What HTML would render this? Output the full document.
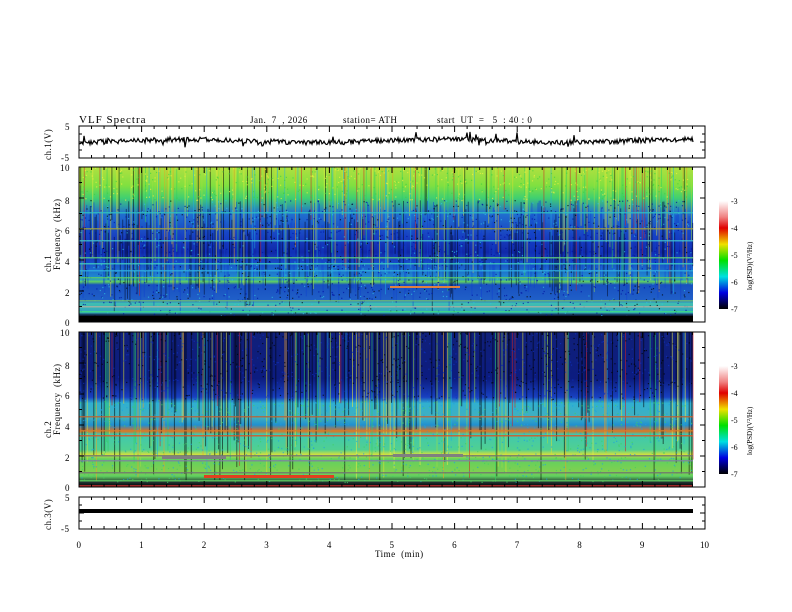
<!DOCTYPE html>
<html><head><meta charset="utf-8"><style>
html,body{margin:0;padding:0;background:#fff;width:792px;height:612px;overflow:hidden}
svg{display:block}
text{font-family:"Liberation Serif",serif;fill:#000}
</style></head><body>
<svg id="s" width="792" height="612" xmlns="http://www.w3.org/2000/svg">
<defs>
<linearGradient id="g1" x1="0" y1="0" x2="0" y2="1">
<stop offset="0" stop-color="#b0e040"/><stop offset="0.12" stop-color="#80e040"/>
<stop offset="0.2" stop-color="#40d070"/><stop offset="0.3" stop-color="#2070d0"/>
<stop offset="0.45" stop-color="#1840c0"/><stop offset="0.55" stop-color="#1028a8"/>
<stop offset="0.62" stop-color="#1850c8"/><stop offset="0.72" stop-color="#2090d0"/>
<stop offset="0.74" stop-color="#60d060"/><stop offset="0.76" stop-color="#1850c0"/>
<stop offset="0.86" stop-color="#2060c8"/><stop offset="0.88" stop-color="#40c0b0"/>
<stop offset="0.94" stop-color="#30a0c0"/><stop offset="0.955" stop-color="#102040"/>
<stop offset="1" stop-color="#000"/>
</linearGradient>
<linearGradient id="g2" x1="0" y1="0" x2="0" y2="1">
<stop offset="0" stop-color="#10207a"/><stop offset="0.3" stop-color="#0c1c80"/>
<stop offset="0.42" stop-color="#1840c0"/><stop offset="0.46" stop-color="#30b0d0"/>
<stop offset="0.55" stop-color="#40b0c0"/><stop offset="0.6" stop-color="#2090d0"/>
<stop offset="0.64" stop-color="#e07020"/><stop offset="0.66" stop-color="#40c8b0"/>
<stop offset="0.76" stop-color="#50d090"/><stop offset="0.79" stop-color="#d0e040"/>
<stop offset="0.82" stop-color="#60d060"/><stop offset="0.9" stop-color="#80d050"/>
<stop offset="0.93" stop-color="#60d060"/><stop offset="0.97" stop-color="#203030"/><stop offset="1" stop-color="#000"/>
</linearGradient>
<linearGradient id="cb" x1="0" y1="0" x2="0" y2="1">
<stop offset="0" stop-color="#fff"/><stop offset="0.15" stop-color="#f08080"/>
<stop offset="0.25" stop-color="#e00000"/><stop offset="0.4" stop-color="#f0e000"/>
<stop offset="0.55" stop-color="#00e000"/><stop offset="0.7" stop-color="#00e0e0"/>
<stop offset="0.85" stop-color="#0000e0"/><stop offset="1" stop-color="#000"/>
</linearGradient>
</defs>
<rect x="79" y="167" width="614" height="155" fill="url(#g1)"/>
<rect x="79" y="332" width="614" height="155" fill="url(#g2)"/>
<g id="st1"></g><g id="st2"></g>
<g id="ax" stroke="#000" fill="none" stroke-width="1"></g>
<polyline id="trace" fill="none" stroke="#000" stroke-width="1.2"/>
<rect x="79" y="509" width="614" height="4" fill="#000"/>
<rect x="719" y="201" width="9" height="108" fill="url(#cb)"/>
<rect x="719" y="366" width="9" height="108" fill="url(#cb)"/>
<g font-size="8">
<text x="731" y="204">-3</text><text x="731" y="231">-4</text><text x="731" y="258">-5</text><text x="731" y="285">-6</text><text x="731" y="312">-7</text>
<text x="731" y="369">-3</text><text x="731" y="396">-4</text><text x="731" y="423">-5</text><text x="731" y="450">-6</text><text x="731" y="477">-7</text>
<text transform="translate(752,290) rotate(-90)" font-size="7">log(PSD)(V²/Hz)</text>
<text transform="translate(752,455) rotate(-90)" font-size="7">log(PSD)(V²/Hz)</text>
</g>
<g font-size="9" letter-spacing="0.5">
<text x="79" y="123" font-size="11" letter-spacing="1">VLF  Spectra</text>
<text x="250" y="123" xml:space="preserve">Jan.  7  , 2026</text>
<text x="343" y="123">station= ATH</text>
<text x="437" y="123" xml:space="preserve">start  UT  =   5  : 40 : 0</text>
<text x="65" y="130">5</text><text x="61" y="161">-5</text>
<text x="60" y="171">10</text><text x="65" y="204">8</text><text x="65" y="234">6</text><text x="65" y="265">4</text><text x="65" y="296">2</text><text x="65" y="326">0</text>
<text x="60" y="336">10</text><text x="65" y="369">8</text><text x="65" y="399">6</text><text x="65" y="430">4</text><text x="65" y="461">2</text><text x="65" y="491">0</text>
<text x="65" y="501">5</text><text x="61" y="532">-5</text>
<text x="375" y="557" xml:space="preserve">Time  (min)</text>
<text transform="translate(51,160) rotate(-90)">ch.1(V)</text>
<text transform="translate(51,272) rotate(-90)">ch.1</text>
<text transform="translate(60,270) rotate(-90)" xml:space="preserve">Frequency  (kHz)</text>
<text transform="translate(51,438) rotate(-90)">ch.2</text>
<text transform="translate(60,435) rotate(-90)" xml:space="preserve">Frequency  (kHz)</text>
<text transform="translate(51,530) rotate(-90)">ch.3(V)</text>
</g>
<g id="xl" font-size="9"></g>
</svg>
<script>
var s=document.getElementById('s'),NS='http://www.w3.org/2000/svg';
var seed=7;function r(){seed=(seed*16807)%2147483647;return seed/2147483647;}
function el(p,t,a){var e=document.createElementNS(NS,t);for(var k in a)e.setAttribute(k,a[k]);p.appendChild(e);return e;}
var c1=['#e0e030','#f0a020','#d02020','#30d060','#20b0e0','#000','#a0e040','#f0f040'];
var st1=document.getElementById('st1'),st2=document.getElementById('st2');
for(var x=79;x<693;x+=1.2){var v=r();
 if(v<0.35){var col=c1[Math.floor(r()*c1.length)];var h=40+r()*90;el(st1,'rect',{x:x,y:167,width:1,height:h,fill:col,opacity:0.5});}
 if(v>0.5){var c=r()<0.55?'#000820':'#1040d0';el(st1,'rect',{x:x,y:200+r()*40,width:1,height:40+r()*40,fill:c,opacity:0.5});}
}
// speckle noise
for(var i=0;i<2500;i++){var X=79+r()*612,Y=167+r()*150;var c=r()<0.5?'#0010a0':(r()<0.5?'#30c0e0':'#000');if(Y<200)c=r()<0.5?'#f0f040':'#40d040';el(st1,'rect',{x:X,y:Y,width:1.2,height:1.2,fill:c,opacity:0.7});}
[[212,'#30c0c0'],[228,'#a0a040'],[240,'#40c0d0'],[257,'#60d080'],[263,'#40d0c0'],[270,'#30b0e0'],[277,'#60d060'],[300,'#70c070'],[306,'#b0b0a0'],[311,'#40e080']].forEach(function(a){el(st1,'rect',{x:79,y:a[0],width:614,height:1.5,fill:a[1],opacity:0.8});});
el(st1,'rect',{x:79,y:316,width:614,height:5,fill:'#000'});
el(st1,'rect',{x:390,y:286,width:70,height:2,fill:'#e08040'});
for(var x=79;x<693;x+=1.3){var v=r();
 if(v<0.45){var col=r()<0.35?'#000':c1[Math.floor(r()*c1.length)];el(st2,'rect',{x:x,y:332,width:1,height:70+r()*80,fill:col,opacity:0.55});}
}
for(var i=0;i<2500;i++){var X=79+r()*612,Y=332+r()*150;var c=Y<400?(r()<0.5?'#000':'#1030c0'):(r()<0.5?'#20a0e0':'#40d060');el(st2,'rect',{x:X,y:Y,width:1.2,height:1.2,fill:c,opacity:0.7});}
[[416,'#c06030'],[430,'#d08030'],[435,'#e05020'],[455,'#707070'],[460,'#8080a0'],[472,'#707070'],[480,'#60d060'],[485,'#c03030']].forEach(function(a){el(st2,'rect',{x:79,y:a[0],width:614,height:1.5,fill:a[1],opacity:0.8});});
el(st2,'rect',{x:162,y:456,width:64,height:3,fill:'#808080'});
el(st2,'rect',{x:393,y:454,width:70,height:3,fill:'#808080'});
el(st2,'rect',{x:204,y:475,width:130,height:3,fill:'#e04020'});
var pts=[];for(var x=79;x<=693;x+=1){var y=141+(r()-0.5)*5+Math.sin(x/40)*1.5;if(r()<0.04)y+= (r()-0.5)*16;pts.push(x+','+y.toFixed(1));}
document.getElementById('trace').setAttribute('points',pts.join(' '));
var ax=document.getElementById('ax');
[[126,158],[167,322],[332,487],[497,529]].forEach(function(p){
 el(ax,'rect',{x:79,y:p[0],width:626,height:p[1]-p[0]});
 for(var i=0;i<=50;i++){var X=79+i*12.52,L=i%5==0?6:3;el(ax,'line',{x1:X,y1:p[0],x2:X,y2:p[0]+L});el(ax,'line',{x1:X,y1:p[1],x2:X,y2:p[1]-L});}
});
[[126,158,4],[497,529,4],[167,322,10],[332,487,10]].forEach(function(p){for(var i=0;i<=p[2];i++){var Y=p[0]+(p[1]-p[0])*i/p[2],L=(i%2==0)?5:3;el(ax,'line',{x1:79,y1:Y,x2:79+L,y2:Y});el(ax,'line',{x1:705,y1:Y,x2:705-L,y2:Y});}});
var xl=document.getElementById('xl');
for(var i=0;i<=10;i++){var t=el(xl,'text',{x:79+i*62.6-(i==10?5:2.5),y:548});t.textContent=i;}
</script>
</body></html>
